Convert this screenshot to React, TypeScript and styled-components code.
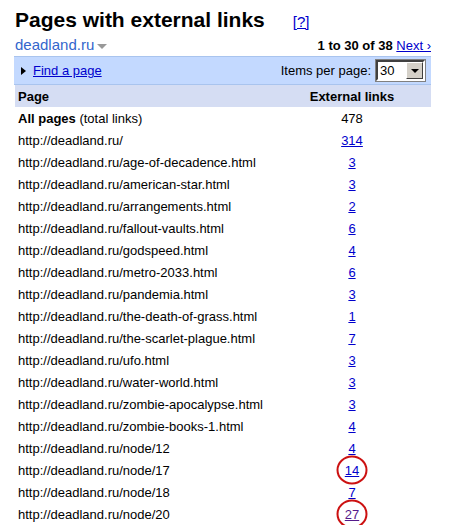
import styled, { createGlobalStyle } from "styled-components";

type Row = { url: string; count: number; marked?: boolean; visited?: boolean };

const ROWS: Row[] = [
	{ url: "http://deadland.ru/", count: 314 },
	{ url: "http://deadland.ru/age-of-decadence.html", count: 3 },
	{ url: "http://deadland.ru/american-star.html", count: 3 },
	{ url: "http://deadland.ru/arrangements.html", count: 2 },
	{ url: "http://deadland.ru/fallout-vaults.html", count: 6 },
	{ url: "http://deadland.ru/godspeed.html", count: 4 },
	{ url: "http://deadland.ru/metro-2033.html", count: 6 },
	{ url: "http://deadland.ru/pandemia.html", count: 3 },
	{ url: "http://deadland.ru/the-death-of-grass.html", count: 1 },
	{ url: "http://deadland.ru/the-scarlet-plague.html", count: 7 },
	{ url: "http://deadland.ru/ufo.html", count: 3 },
	{ url: "http://deadland.ru/water-world.html", count: 3 },
	{ url: "http://deadland.ru/zombie-apocalypse.html", count: 3 },
	{ url: "http://deadland.ru/zombie-books-1.html", count: 4 },
	{ url: "http://deadland.ru/node/12", count: 4 },
	{ url: "http://deadland.ru/node/17", count: 14, marked: true },
	{ url: "http://deadland.ru/node/18", count: 7 },
	{ url: "http://deadland.ru/node/20", count: 27, marked: true, visited: true },
];

const GlobalStyle = createGlobalStyle`
	body {
		margin: 0;
		background: #fff;
		font-family: "Liberation Sans", Arial, sans-serif;
		font-size: 13px;
		color: #000;
	}
`;

export default function App() {
	return (
		<Page>
			<GlobalStyle />
			<TitleRow>
				<Title>Pages with external links</Title>
				<HelpLink href="#">[?]</HelpLink>
			</TitleRow>
			<SiteRow>
				<SiteName>
					deadland.ru
					<SiteArrow />
				</SiteName>
				<Paging>
					1 to 30 of 38 <Link href="#">Next ›</Link>
				</Paging>
			</SiteRow>
			<FilterBar>
				<FindPage>
					<Triangle />
					<Link href="#">Find a page</Link>
				</FindPage>
				<ItemsPerPage>
					Items per page:
					<FakeSelect>
						<SelectValue>30</SelectValue>
						<SelectButton>
							<SelectArrow />
						</SelectButton>
					</FakeSelect>
				</ItemsPerPage>
			</FilterBar>
			<Table>
				<HeadRow>
					<HeadCell>Page</HeadCell>
					<HeadCell $center>External links</HeadCell>
				</HeadRow>
				<BodyRow>
					<Cell>
						<strong>All pages</strong> (total links)
					</Cell>
					<Cell $center>478</Cell>
				</BodyRow>
				{ROWS.map((row) => (
					<BodyRow key={row.url}>
						<Cell>{row.url}</Cell>
						<Cell $center>
							<CountLink href="#" $visited={row.visited}>
								{row.count}
								{row.marked && <Mark />}
							</CountLink>
						</Cell>
					</BodyRow>
				))}
			</Table>
		</Page>
	);
}

const Page = styled.div`
	width: 417px;
	margin-left: 14px;
	padding-top: 7px;
`;

const TitleRow = styled.div`
	display: flex;
	align-items: baseline;
	padding-left: 1px;
`;

const Title = styled.h1`
	margin: 0;
	font-size: 21px;
	font-weight: bold;
	line-height: 26px;
`;

const HelpLink = styled.a`
	margin-left: 28px;
	font-size: 15px;
	color: #0000cc;
`;

const Link = styled.a`
	color: #0000cc;
	text-decoration: underline;
`;

const SiteRow = styled.div`
	display: flex;
	justify-content: space-between;
	align-items: baseline;
	height: 23px;
	padding-left: 1px;
`;

const SiteName = styled.div`
	display: flex;
	align-items: center;
	font-size: 15px;
	color: #3366cc;
	line-height: 24px;
`;

const SiteArrow = styled.span`
	margin-left: 3px;
	margin-top: 2px;
	border-left: 5px solid transparent;
	border-right: 5px solid transparent;
	border-top: 5px solid #999;
`;

const Paging = styled.div`
	font-weight: bold;
	font-size: 13px;

	a {
		font-weight: normal;
	}
`;

const FilterBar = styled.div`
	display: flex;
	justify-content: space-between;
	align-items: center;
	height: 27px;
	padding: 0 6px 0 7px;
	background: #c3d9ff;
	border-top: 1px solid #a9c4ee;
	border-bottom: 1px solid #a9c4ee;
`;

const FindPage = styled.div`
	display: flex;
	align-items: center;
	gap: 7px;
`;

const Triangle = styled.span`
	border-top: 4px solid transparent;
	border-bottom: 4px solid transparent;
	border-left: 5px solid #000;
`;

const ItemsPerPage = styled.div`
	display: flex;
	align-items: center;
	gap: 5px;
`;

const FakeSelect = styled.div`
	display: flex;
	width: 49px;
	height: 21px;
	box-sizing: border-box;
	background: #fff;
	border: 2px solid;
	border-color: #404040 #fff #fff #404040;
	box-shadow: 0 0 0 1px #808080;
`;

const SelectValue = styled.span`
	flex: 1;
	padding-left: 2px;
	line-height: 17px;
`;

const SelectButton = styled.span`
	display: flex;
	align-items: center;
	justify-content: center;
	width: 15px;
	background: #d4d0c8;
	border: 1px solid;
	border-color: #fff #404040 #404040 #fff;
`;

const SelectArrow = styled.span`
	border-left: 4px solid transparent;
	border-right: 4px solid transparent;
	border-top: 4px solid #000;
`;

const Table = styled.div`
	display: flex;
	flex-direction: column;
	padding-left: 1px;
`;

const HeadRow = styled.div`
	display: grid;
	grid-template-columns: 1fr 130px;
	height: 22px;
	align-items: center;
	background: #d5ddf3;
`;

const HeadCell = styled.div<{ $center?: boolean }>`
	font-weight: bold;
	font-size: 13px;
	padding-left: ${(p) => (p.$center ? "0" : "3px")};
	padding-right: ${(p) => (p.$center ? "28px" : "0")};
	text-align: ${(p) => (p.$center ? "center" : "left")};
`;

const BodyRow = styled.div`
	display: grid;
	grid-template-columns: 1fr 130px;
	height: 22px;
	align-items: center;
`;

const Cell = styled.div<{ $center?: boolean }>`
	padding-left: ${(p) => (p.$center ? "0" : "3px")};
	padding-right: ${(p) => (p.$center ? "28px" : "0")};
	text-align: ${(p) => (p.$center ? "center" : "left")};
	white-space: nowrap;
`;

const CountLink = styled.a<{ $visited?: boolean }>`
	position: relative;
	color: ${(p) => (p.$visited ? "#551a8b" : "#0000cc")};
`;

const Mark = styled.span`
	position: absolute;
	left: 50%;
	top: 50%;
	width: 27px;
	height: 25px;
	transform: translate(-50%, -50%);
	border: 2px solid #cc1111;
	border-radius: 50%;
`;
